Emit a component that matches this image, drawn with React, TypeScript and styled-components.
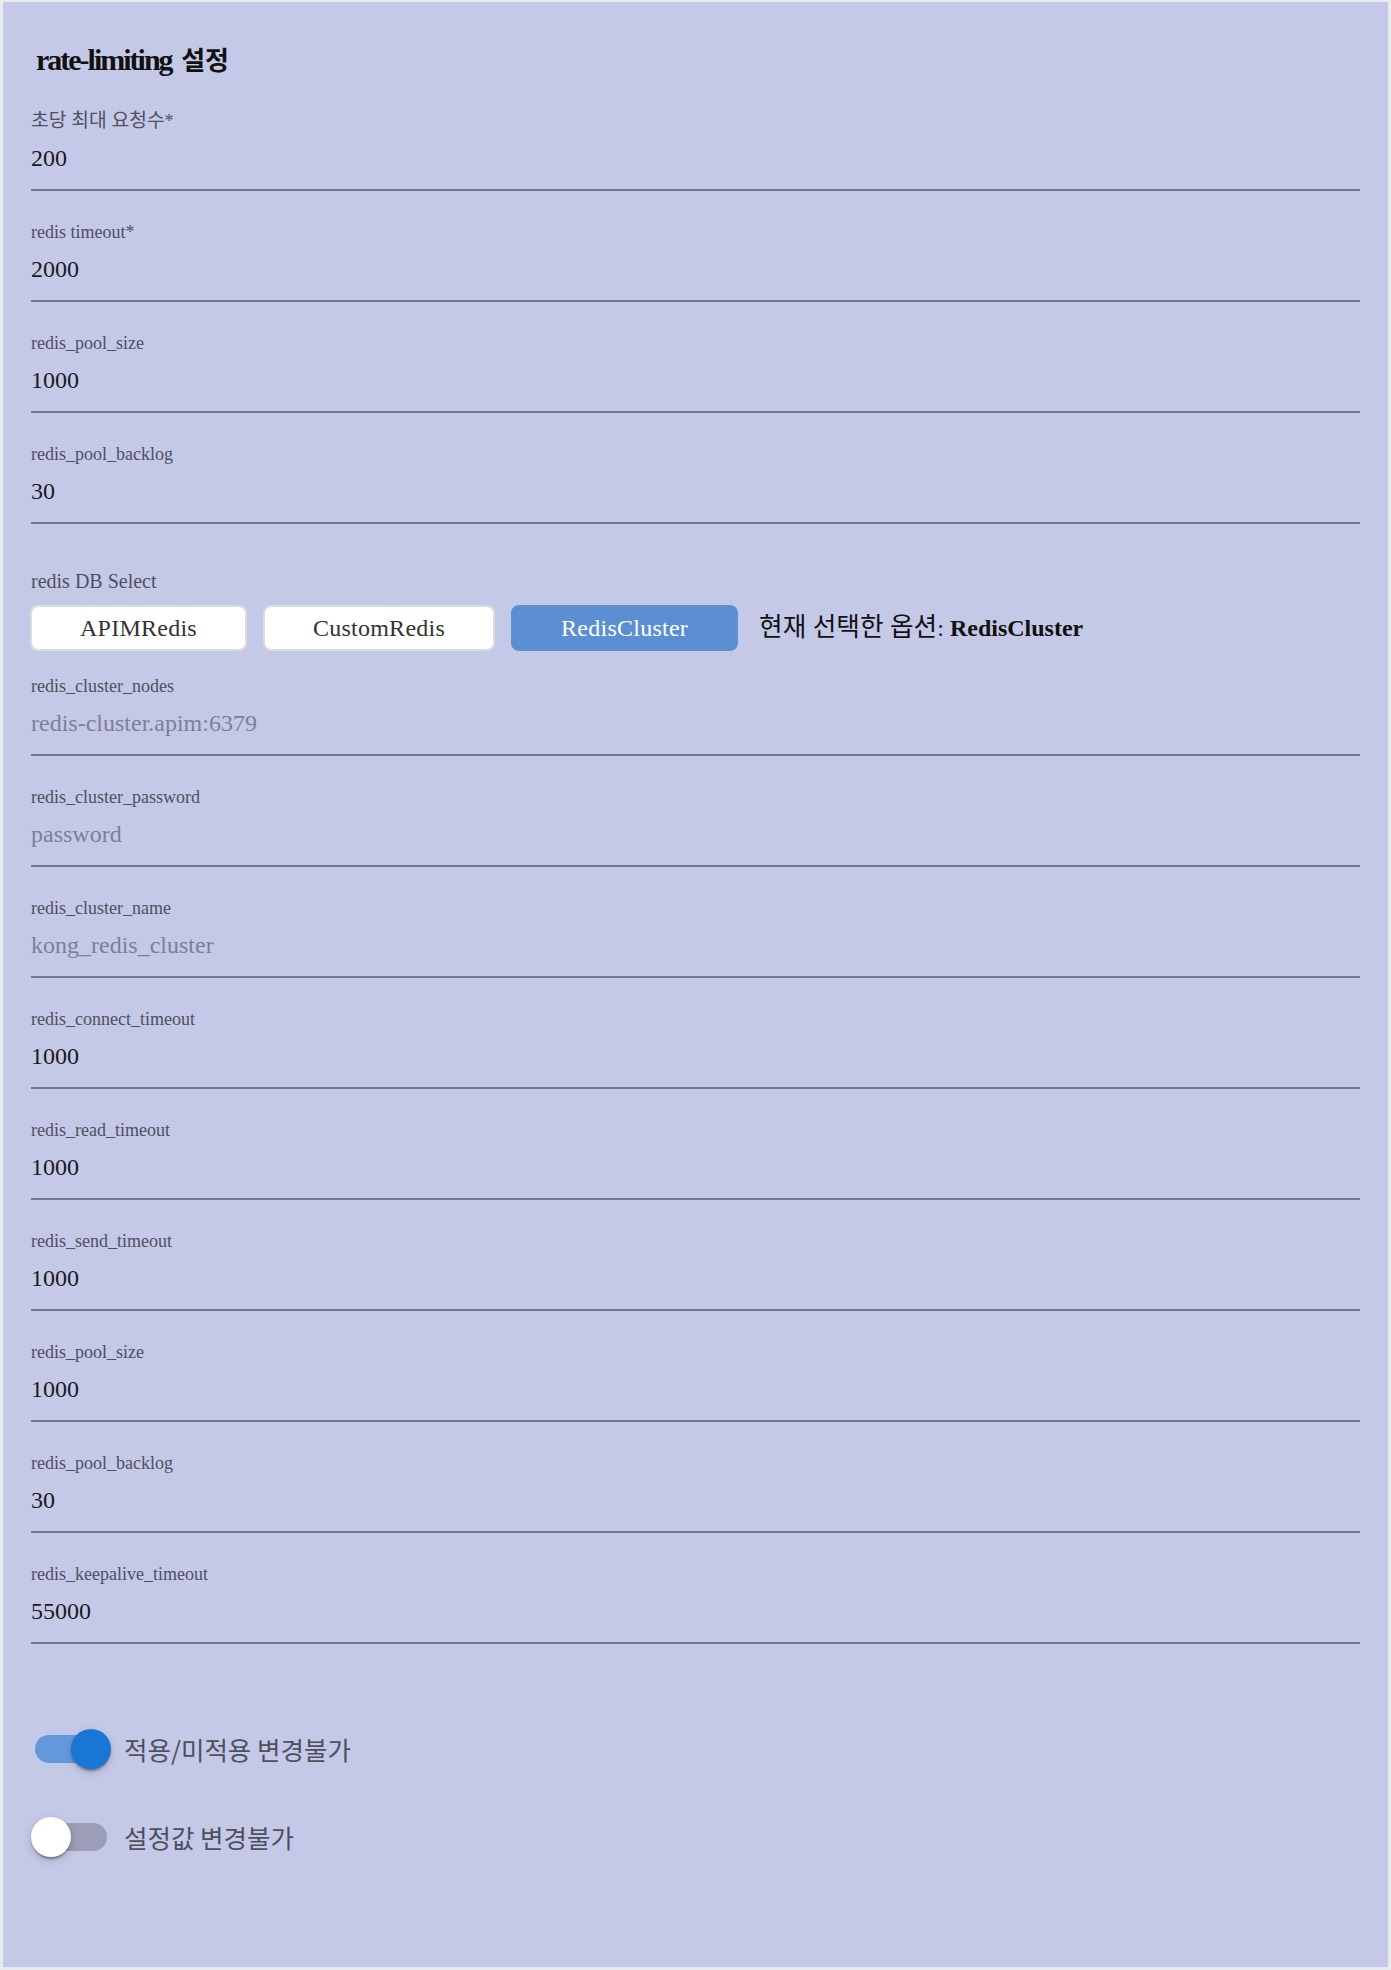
import React, { useState } from 'react';
import styled, { createGlobalStyle } from 'styled-components';

const GlobalStyle = createGlobalStyle`
  html, body {
    margin: 0;
    padding: 0;
    background: #e8eaed;
  }
  body {
    font-family: "Liberation Serif", "Noto Sans CJK KR", serif;
  }
  * { box-sizing: border-box; }
`;

const Page = styled.div`
  padding: 2px 3px 4px;
`;

const Panel = styled.section`
  background: #c5c9e8;
  padding: 40px 28px 110px;
`;

const Title = styled.h2`
  margin: 0 0 2px 5px;
  height: 36px;
  font-family: "Liberation Serif", "Noto Sans CJK KR", serif;
  font-size: 30px;
  line-height: 36px;
  font-weight: 700;
  letter-spacing: -2px;
  color: #111;
`;

const TitleKo = styled.span`
  margin-left: 3px;
  font-size: 26px;
  line-height: 1;
  letter-spacing: 0;
`;

/* Korean runs are drawn a little wider in the reference's font */
const Ko = styled.span`
  font-size: 1.07em;
  line-height: 1;
`;

const Field = styled.div<{ $top?: number }>`
  padding: ${(p) => p.$top ?? 30}px 0 16px;
  border-bottom: 2px solid #737688;
`;

const Label = styled.label`
  display: block;
  height: 22px;
  font-size: 18px;
  line-height: 22px;
  color: #4f505d;
`;

const Input = styled.input`
  display: block;
  width: 100%;
  height: 30px;
  margin-top: 11px;
  padding: 0;
  border: none;
  outline: none;
  background: transparent;
  font-family: "Liberation Serif", "Noto Sans CJK KR", serif;
  font-size: 24px;
  line-height: 30px;
  color: #1a1a1e;
  &::placeholder {
    color: #7d8093;
    opacity: 1;
  }
`;

const SelectBlock = styled.div`
  padding-top: 45px;
`;

const SelectLabel = styled.div`
  font-size: 20px;
  line-height: 24px;
  color: #4f505d;
`;

const ButtonRow = styled.div`
  display: flex;
  align-items: center;
  gap: 16px;
  margin-top: 12px;
  margin-left: -1px;
`;

const OptionButton = styled.button<{ $active?: boolean }>`
  height: 46px;
  padding: 0 48px;
  border: 2px solid ${(p) => (p.$active ? '#5b8fd1' : '#dcdcdf')};
  border-radius: 8px;
  background: ${(p) => (p.$active ? '#5b8fd1' : '#ffffff')};
  color: ${(p) => (p.$active ? '#ffffff' : '#333333')};
  font-family: "Liberation Serif", serif;
  font-size: 24px;
  letter-spacing: 0.25px;
  cursor: pointer;
`;

const Status = styled.span`
  margin-left: 5px;
  font-size: 24px;
  color: #111;
`;

const ToggleList = styled.div`
  margin-top: 85px;
  display: flex;
  flex-direction: column;
  gap: 48px;
`;

const ToggleRow = styled.label`
  display: flex;
  align-items: center;
  gap: 13px;
  cursor: pointer;
`;

const SwitchBox = styled.span`
  position: relative;
  width: 80px;
  height: 40px;
  flex: none;
`;

const Track = styled.span<{ $on: boolean }>`
  position: absolute;
  left: 4px;
  top: 6px;
  width: 72px;
  height: 28px;
  border-radius: 14px;
  background: ${(p) => (p.$on ? '#6399dc' : '#9b9eb6')};
`;

const Thumb = styled.span<{ $on: boolean }>`
  position: absolute;
  top: 0;
  left: ${(p) => (p.$on ? 40 : 0)}px;
  width: 40px;
  height: 40px;
  border-radius: 50%;
  background: ${(p) => (p.$on ? '#1976d2' : '#ffffff')};
  box-shadow: 0 4px 2px -2px rgba(0, 0, 0, 0.2), 0 2px 2px rgba(0, 0, 0, 0.14),
    0 3px 8px rgba(0, 0, 0, 0.18);
`;

const ToggleText = styled.span`
  font-family: "Noto Sans CJK KR", "Noto Sans", sans-serif;
  font-size: 25.5px;
  line-height: 40px;
  color: #4f505d;
`;

type FieldDef = { label: React.ReactNode; value?: string; placeholder?: string };

const topFields: FieldDef[] = [
  { label: <><Ko>초당 최대 요청수</Ko>*</>, value: '200' },
  { label: 'redis timeout*', value: '2000' },
  { label: 'redis_pool_size', value: '1000' },
  { label: 'redis_pool_backlog', value: '30' },
];

const clusterFields: FieldDef[] = [
  { label: 'redis_cluster_nodes', placeholder: 'redis-cluster.apim:6379' },
  { label: 'redis_cluster_password', placeholder: 'password' },
  { label: 'redis_cluster_name', placeholder: 'kong_redis_cluster' },
  { label: 'redis_connect_timeout', value: '1000' },
  { label: 'redis_read_timeout', value: '1000' },
  { label: 'redis_send_timeout', value: '1000' },
  { label: 'redis_pool_size', value: '1000' },
  { label: 'redis_pool_backlog', value: '30' },
  { label: 'redis_keepalive_timeout', value: '55000' },
];

const options = ['APIMRedis', 'CustomRedis', 'RedisCluster'];

function TextField({ def, top, id }: { def: FieldDef; top?: number; id: string }) {
  return (
    <Field $top={top}>
      <Label htmlFor={id}>{def.label}</Label>
      <Input id={id} defaultValue={def.value} placeholder={def.placeholder} />
    </Field>
  );
}

function Switch({ on }: { on: boolean }) {
  return (
    <SwitchBox>
      <Track $on={on} />
      <Thumb $on={on} />
    </SwitchBox>
  );
}

export default function App() {
  const [selected, setSelected] = useState('RedisCluster');
  const [applyLock, setApplyLock] = useState(true);
  const [valueLock, setValueLock] = useState(false);

  return (
    <Page>
      <GlobalStyle />
      <Panel>
        <Title>
          rate-limiting<TitleKo> 설정</TitleKo>
        </Title>
        {topFields.map((f, i) => (
          <TextField key={`t${i}`} id={`t${i}`} def={f} />
        ))}
        <SelectBlock>
          <SelectLabel>redis DB Select</SelectLabel>
          <ButtonRow>
            {options.map((o) => (
              <OptionButton key={o} $active={o === selected} onClick={() => setSelected(o)}>
                {o}
              </OptionButton>
            ))}
            <Status>
              <Ko>현재 선택한 옵션</Ko>: <b>{selected}</b>
            </Status>
          </ButtonRow>
        </SelectBlock>
        {clusterFields.map((f, i) => (
          <TextField key={`c${i}`} id={`c${i}`} def={f} top={i === 0 ? 24 : undefined} />
        ))}
        <ToggleList>
          <ToggleRow onClick={() => setApplyLock(!applyLock)}>
            <Switch on={applyLock} />
            <ToggleText>적용/미적용 변경불가</ToggleText>
          </ToggleRow>
          <ToggleRow onClick={() => setValueLock(!valueLock)}>
            <Switch on={valueLock} />
            <ToggleText>설정값 변경불가</ToggleText>
          </ToggleRow>
        </ToggleList>
      </Panel>
    </Page>
  );
}
